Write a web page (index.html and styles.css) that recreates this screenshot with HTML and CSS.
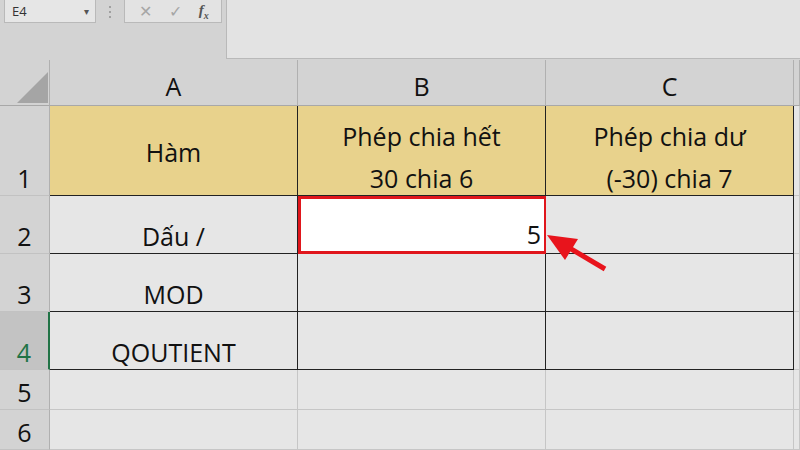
FILE: index.html
```html
<!DOCTYPE html>
<html lang="vi">
  <head>
    <meta charset="UTF-8" />
    <meta name="viewport" content="width=device-width, initial-scale=1.0" />
    <title>Hàm chia trong Excel</title>
    <link rel="stylesheet" href="styles.css">
  </head>
  <body>
    <!-- Thanh công thức -->
    <div class="formula-bar">
      <div class="name-box">
        <span>E4</span>
        <span class="caret">&#9662;</span>
      </div>
      <div class="grip"><i></i><i></i><i></i></div>
      <div class="fx-buttons">
        <span class="btn-x">&#10005;</span>
        <span class="btn-ok">&#10003;</span>
        <span class="btn-fx">f<sub>x</sub></span>
      </div>
      <div class="formula-input"></div>
    </div>

    <!-- Bảng tính -->
    <div class="sheet">
      <div class="corner"><div class="triangle"></div></div>
      <div class="col-head">A</div>
      <div class="col-head">B</div>
      <div class="col-head">C</div>
      <div class="col-head"></div>

      <div class="row-head">1</div>
      <div class="cell title middle">Hàm</div>
      <div class="cell title"><span class="wrap">Phép chia hết<br>30 chia 6</span></div>
      <div class="cell title"><span class="wrap">Phép chia dư<br>(-30) chia 7</span></div>
      <div class="cell blank"></div>

      <div class="row-head">2</div>
      <div class="cell">Dấu /</div>
      <div class="cell active">5</div>
      <div class="cell"></div>
      <div class="cell blank"></div>

      <div class="row-head">3</div>
      <div class="cell">MOD</div>
      <div class="cell"></div>
      <div class="cell"></div>
      <div class="cell blank"></div>

      <div class="row-head selected">4</div>
      <div class="cell">QOUTIENT</div>
      <div class="cell"></div>
      <div class="cell"></div>
      <div class="cell blank"></div>

      <div class="row-head short">5</div>
      <div class="cell blank"></div>
      <div class="cell blank"></div>
      <div class="cell blank"></div>
      <div class="cell blank"></div>

      <div class="row-head short">6</div>
      <div class="cell blank"></div>
      <div class="cell blank"></div>
      <div class="cell blank"></div>
      <div class="cell blank"></div>
    </div>

    <!-- Mũi tên chỉ vào kết quả -->
    <svg class="pointer" width="80" height="50" viewBox="0 0 80 50">
      <line x1="58" y1="36" x2="14" y2="10" stroke="#e8141c" stroke-width="5" />
      <polygon points="0,2 31,6 18,27" fill="#e8141c" />
    </svg>
  </body>
</html>
```

FILE: styles.css
```css
* {
  box-sizing: border-box;
}

body {
  margin: 0;
  width: 800px;
  height: 450px;
  overflow: hidden;
  position: relative;
  background-color: #d3d3d3;
  font-family: "Open Sans", Arial, sans-serif;
  color: #111;
}

.formula-bar {
  display: flex;
  align-items: flex-start;
  height: 60px;
  padding-left: 4px;
  background-color: #d3d3d3;
}

.name-box {
  width: 92px;
  height: 23px;
  display: flex;
  align-items: center;
  justify-content: space-between;
  padding: 0 6px 0 7px;
  background-color: #e6e6e6;
  border: 1px solid #b9b9b9;
  border-top: none;
  font-size: 13px;
  color: #333;
}

.caret {
  font-size: 10px;
  color: #555;
}

.grip {
  width: 28px;
  height: 23px;
  display: flex;
  flex-direction: column;
  align-items: center;
  justify-content: center;
  gap: 3px;
}

.grip i {
  width: 2px;
  height: 2px;
  background-color: #a0a0a0;
}

.fx-buttons {
  width: 98px;
  height: 23px;
  display: flex;
  align-items: center;
  justify-content: space-around;
  padding: 0 4px 0 6px;
  background-color: #e3e3e3;
  border: 1px solid #b9b9b9;
  border-top: none;
  color: #a6a6a6;
  font-size: 16px;
}

.btn-fx {
  font-family: "Liberation Serif", serif;
  font-style: italic;
  font-weight: bold;
  color: #555;
  font-size: 15px;
}

.btn-fx sub {
  font-size: 10px;
}

.formula-input {
  flex: 1;
  height: 59px;
  margin-left: 4px;
  background-color: #e3e3e3;
  border: 1px solid #b9b9b9;
  border-top: none;
  border-right: none;
}

.sheet {
  display: grid;
  grid-template-columns: 50px 248px 248px 248px 6px;
  grid-template-rows: 46px 90px 58px 58px 58px 40px 40px;
  font-size: 25px;
}

.corner {
  position: relative;
  background-color: #d3d3d3;
  border-right: 1px solid #b0b0b0;
  border-bottom: 1px solid #a8a8a8;
}

.triangle {
  position: absolute;
  left: 17px;
  top: 12px;
  width: 31px;
  height: 31px;
  background-color: #a5a5a5;
  clip-path: polygon(100% 0, 100% 100%, 0 100%);
}

.col-head {
  display: flex;
  align-items: flex-end;
  justify-content: center;
  padding-bottom: 2px;
  background-color: #d3d3d3;
  border-right: 1px solid #b0b0b0;
  border-bottom: 1px solid #a8a8a8;
}

.row-head {
  display: flex;
  align-items: flex-end;
  justify-content: center;
  padding-bottom: 0;
  background-color: #d3d3d3;
  border-right: 1px solid #b0b0b0;
  border-bottom: 1px solid #c2c2c2;
}

.row-head.selected {
  background-color: #c3c3c3;
  color: #217346;
  border-right: 2px solid #217346;
}

.row-head.short {
  padding-bottom: 0;
}

.cell {
  display: flex;
  flex-direction: column;
  align-items: center;
  justify-content: flex-end;
  text-align: center;
  padding-bottom: 0;
  background-color: #e6e6e6;
  border-right: 1px solid #222;
  border-bottom: 1px solid #222;
}

.cell.title {
  background-color: #e8d28c;
  line-height: 42px;
  padding-bottom: 0;
}

.cell.title .wrap {
  margin-bottom: -4px;
}

.cell.middle {
  justify-content: center;
  padding-top: 2px;
}

.cell.active {
  align-items: flex-end;
  padding-right: 3px;
  background-color: #fff;
  border: 3px solid #e0161c;
  margin: 0 -1px 0 0;
}

.cell.blank {
  border-right: 1px solid #c6c6c6;
  border-bottom: 1px solid #c6c6c6;
}

.pointer {
  position: absolute;
  left: 547px;
  top: 233px;
}
```
